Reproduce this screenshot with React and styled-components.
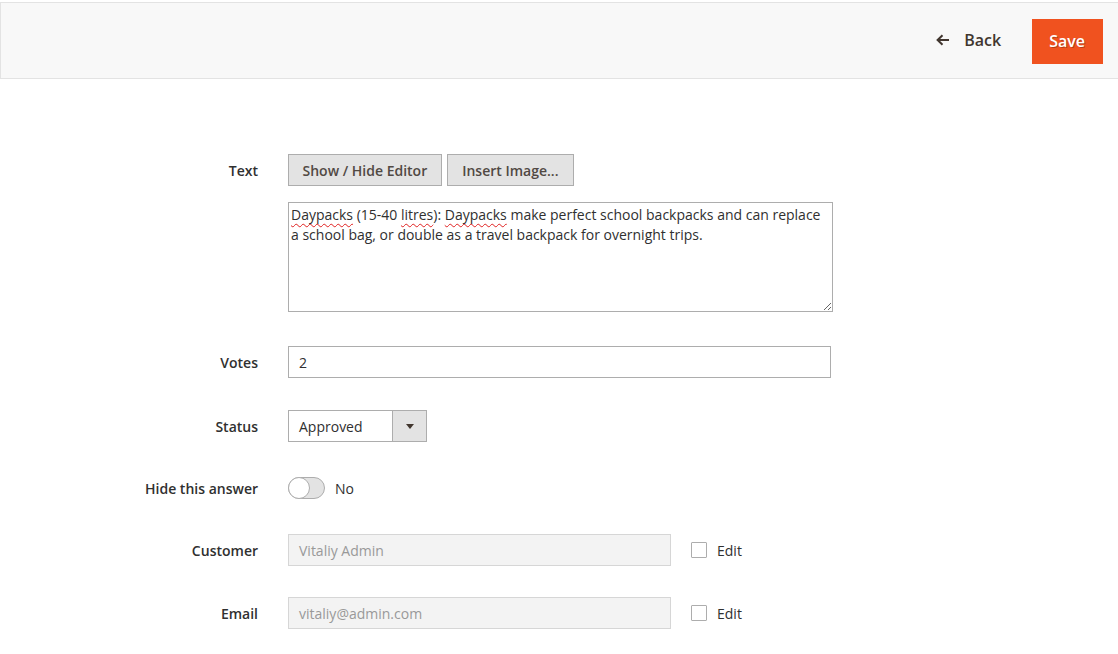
import React from 'react'
import styled, { createGlobalStyle } from 'styled-components'

const GlobalStyle = createGlobalStyle`
  html, body {
    margin: 0;
    padding: 0;
    background: #fff;
  }
  body {
    font-family: 'Open Sans', 'Noto Sans', sans-serif;
    font-size: 14px;
    color: #303030;
  }
`

const Page = styled.div`
  width: 1118px;
  min-height: 654px;
  padding-top: 2px;
  box-sizing: border-box;
`

const Header = styled.header`
  height: 77px;
  box-sizing: border-box;
  background: #f8f8f8;
  border-top: 1px solid #e3e3e3;
  border-bottom: 1px solid #e3e3e3;
  border-left: 1px solid #e3e3e3;
  display: flex;
  align-items: center;
  justify-content: flex-end;
  padding-right: 15px;
`

const BackLink = styled.a`
  display: flex;
  align-items: center;
  gap: 14px;
  color: #41362f;
  font-size: 16px;
  font-weight: 600;
  text-decoration: none;
  margin-right: 31px;
  margin-bottom: 1px;
`

const SaveButton = styled.button`
  height: 45px;
  padding: 0 17px 0 16px;
  background: #f0521f;
  border: 1px solid #f0521f;
  color: #fff;
  font-family: inherit;
  font-size: 16px;
  font-weight: 600;
  text-shadow: 1px 1px 0 rgba(0, 0, 0, 0.25);
  margin-top: 1px;
`

const Form = styled.div`
  margin-top: 75px;
  display: flex;
  flex-direction: column;
`

const Row = styled.div`
  display: grid;
  grid-template-columns: 258px 1fr;
  column-gap: 30px;
  align-items: ${p => (p.top ? 'start' : 'center')};
  margin-bottom: ${p => p.gap || 30}px;
  min-height: 32px;
`

const Label = styled.label`
  height: 32px;
  box-sizing: border-box;
  text-align: right;
  font-weight: 600;
  color: #303030;
  line-height: 30px;
  padding-top: 2px;
`

const Control = styled.div`
  display: flex;
  flex-direction: column;
  gap: 16px;
`

const ButtonBar = styled.div`
  display: flex;
  gap: 5px;
`

const GreyButton = styled.button`
  height: 32px;
  padding: 0 ${p => p.pad || 13}px;
  background: #e3e3e3;
  border: 1px solid #adadad;
  color: #514943;
  font-family: inherit;
  font-size: 14px;
  font-weight: 600;
`

const TextArea = styled.div`
  width: 545px;
  height: 110px;
  box-sizing: border-box;
  border: 1px solid #adadad;
  padding: 2px 2px;
  line-height: 20px;
  color: #303030;
  overflow: auto;
  resize: both;
`

const Misspelled = styled.span`
  text-decoration: underline wavy #e02020;
  text-decoration-thickness: 1px;
  text-underline-offset: 3px;
  text-decoration-skip-ink: none;
`

const Input = styled.div`
  width: ${p => p.width}px;
  height: 32px;
  box-sizing: border-box;
  border: 1px solid ${p => (p.disabled ? '#d6d6d6' : '#adadad')};
  background: ${p => (p.disabled ? '#f3f3f3' : '#fff')};
  color: ${p => (p.disabled ? '#999' : '#303030')};
  padding: 0 10px;
  display: flex;
  align-items: center;
`

const Select = styled.div`
  width: 139px;
  height: 32px;
  box-sizing: border-box;
  border: 1px solid #adadad;
  display: flex;
`

const SelectValue = styled.div`
  flex: 1;
  padding: 0 10px;
  display: flex;
  align-items: center;
`

const SelectArrow = styled.div`
  width: 33px;
  background: #e3e3e3;
  border-left: 1px solid #adadad;
  display: flex;
  align-items: center;
  justify-content: center;
  &::after {
    content: '';
    border-left: 4px solid transparent;
    border-right: 4px solid transparent;
    border-top: 5px solid #41362f;
    margin-top: 1px;
  }
`

const Inline = styled.div`
  display: flex;
  align-items: center;
  gap: ${p => p.gap || 10}px;
`

const Toggle = styled.span`
  position: relative;
  width: 37px;
  height: 22px;
  box-sizing: border-box;
  border: 1px solid #adadad;
  border-radius: 12px;
  background: #e3e3e3;
  &::before {
    content: '';
    position: absolute;
    left: -1px;
    top: -1px;
    width: 22px;
    height: 22px;
    box-sizing: border-box;
    border-radius: 50%;
    border: 1px solid #adadad;
    background: #fff;
  }
`

const Checkbox = styled.span`
  width: 16px;
  height: 16px;
  box-sizing: border-box;
  border: 1px solid #adadad;
  border-radius: 1px;
  background: #fff;
`

const ArrowLeft = () => (
  <svg width="14" height="12" viewBox="0 0 14 12" fill="none">
    <path d="M13 6H2M6.5 1.2L1.6 6l4.9 4.8" stroke="#41362f" strokeWidth="2" />
  </svg>
)

export default function App() {
  return (
    <Page>
      <GlobalStyle />
      <Header>
        <BackLink>
          <ArrowLeft />
          Back
        </BackLink>
        <SaveButton>Save</SaveButton>
      </Header>

      <Form>
        <Row top gap={34}>
          <Label>Text</Label>
          <Control>
            <ButtonBar>
              <GreyButton pad={13.5}>Show / Hide Editor</GreyButton>
              <GreyButton pad={14.5}>Insert Image...</GreyButton>
            </ButtonBar>
            <TextArea>
              <Misspelled>Daypacks</Misspelled> (15-40 <Misspelled>litres</Misspelled>):{' '}
              <Misspelled>Daypacks</Misspelled> make perfect school backpacks and can replace a
              school bag, or double as a travel backpack for overnight trips.
            </TextArea>
          </Control>
        </Row>

        <Row gap={32}>
          <Label>Votes</Label>
          <Input width={543}>2</Input>
        </Row>

        <Row gap={30}>
          <Label>Status</Label>
          <Select>
            <SelectValue>Approved</SelectValue>
            <SelectArrow />
          </Select>
        </Row>

        <Row gap={30}>
          <Label>Hide this answer</Label>
          <Inline>
            <Toggle />
            No
          </Inline>
        </Row>

        <Row gap={31}>
          <Label>Customer</Label>
          <Inline gap={20}>
            <Input width={383} disabled>Vitaliy Admin</Input>
            <Inline>
              <Checkbox />
              Edit
            </Inline>
          </Inline>
        </Row>

        <Row gap={30}>
          <Label>Email</Label>
          <Inline gap={20}>
            <Input width={383} disabled>vitaliy@admin.com</Input>
            <Inline>
              <Checkbox />
              Edit
            </Inline>
          </Inline>
        </Row>
      </Form>
    </Page>
  )
}
